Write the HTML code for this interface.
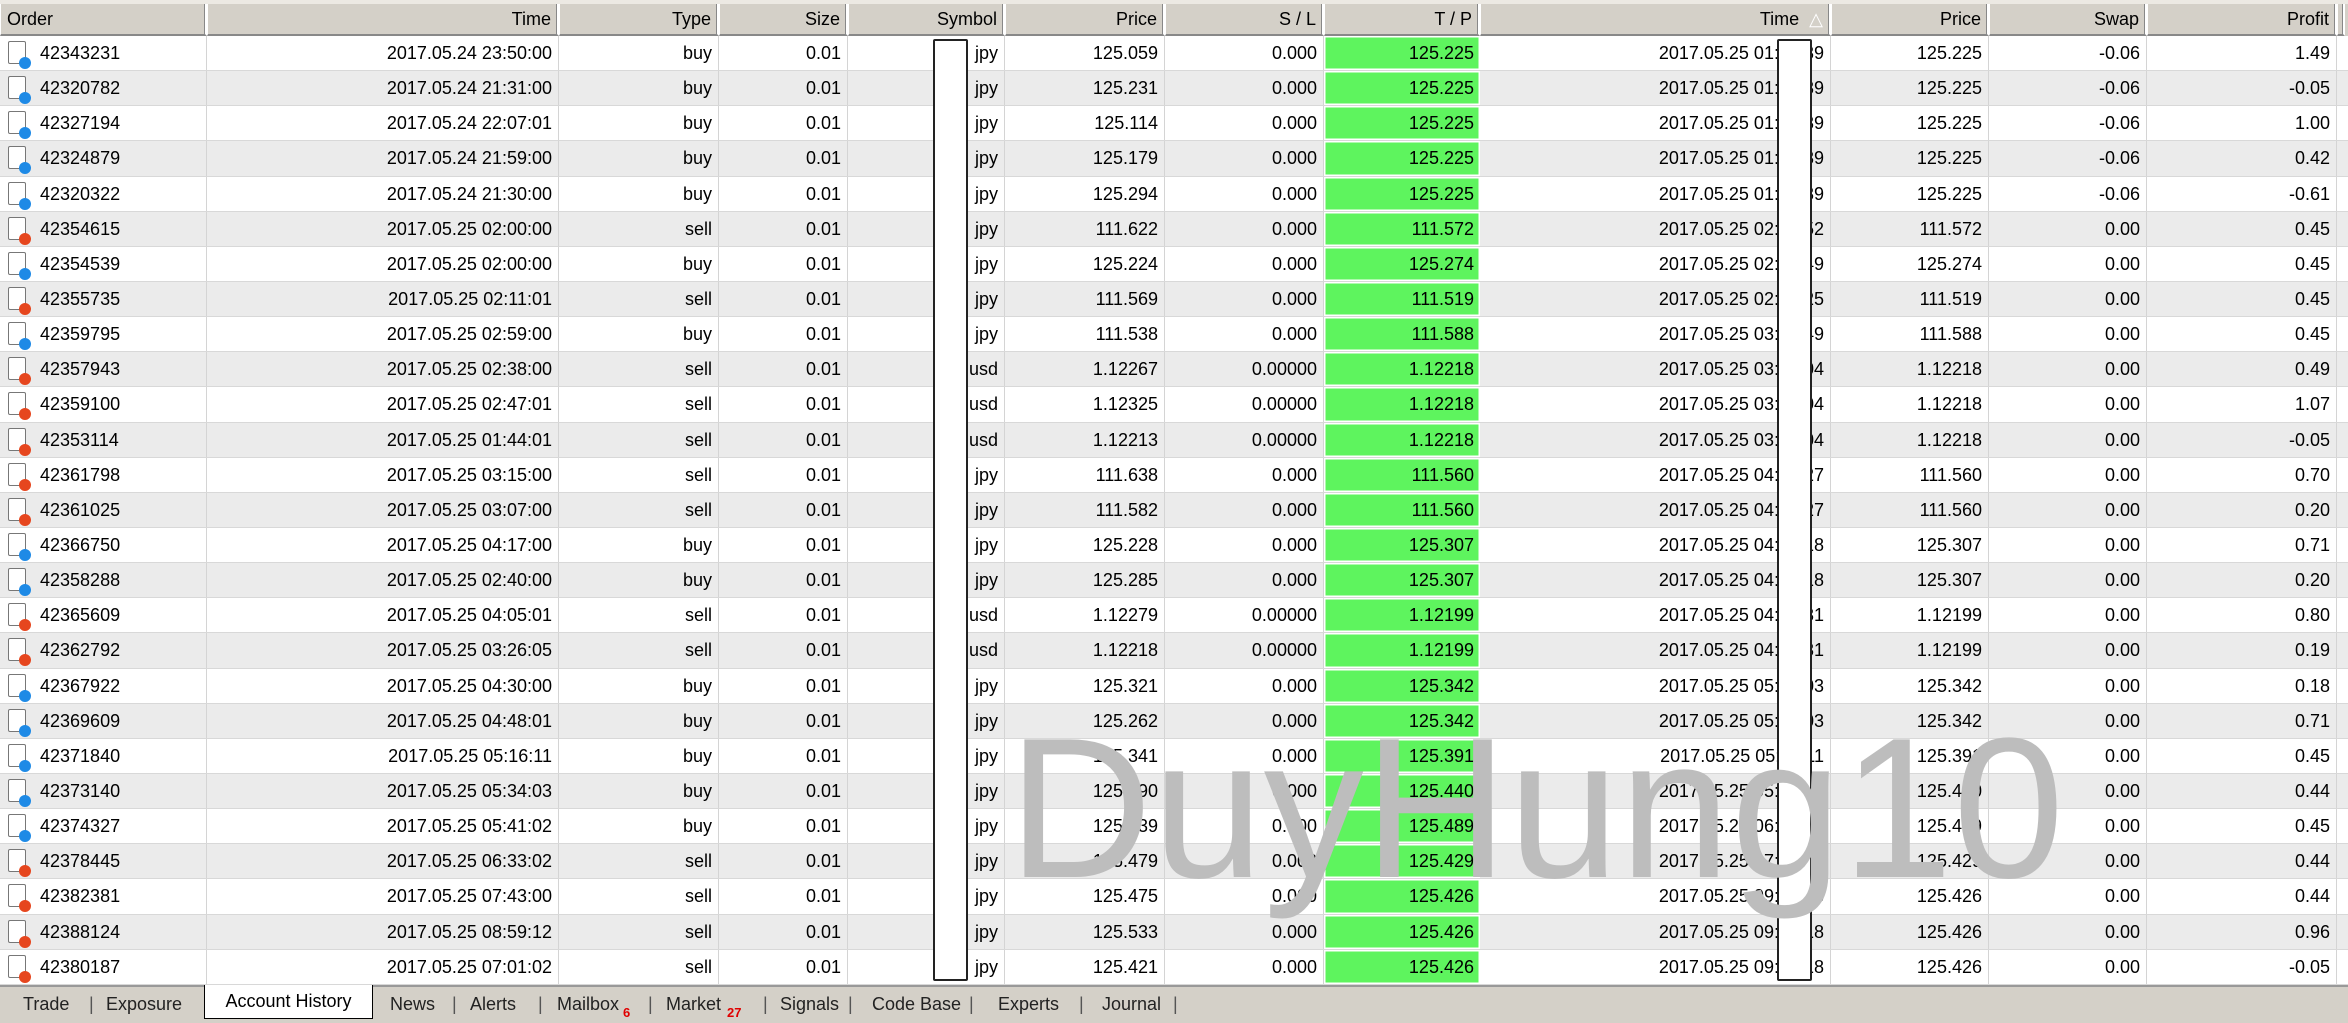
<!DOCTYPE html>
<html><head><meta charset="utf-8"><style>
*{margin:0;padding:0;box-sizing:border-box}
body{width:2348px;height:1023px;overflow:hidden;background:#fff;font-family:"Liberation Sans",Tahoma,sans-serif;font-size:18px;color:#000;position:relative}
.hdr{position:absolute;left:0;top:0;width:2348px;height:36px;background:#d4d0c8;border-top:4px solid #ece9e3;display:flex}
.hdr div{height:32px;line-height:30px;text-align:right;padding:0 6px;border-right:2px solid #fff;border-left:1px solid #fff;border-bottom:2px solid #888;box-shadow:inset -1px 0 0 #888;background:#d4d0c8}
.hdr div:first-child{text-align:left}
#rows{position:absolute;left:0;top:36px;width:2348px}
.r{display:flex;height:35.15px;line-height:34px;border-bottom:1px solid #d8d8d8}
.r:nth-child(even){background:#ebebeb}
.r div{text-align:right;padding-right:6px;border-right:1px solid #d4d4d4;white-space:nowrap;overflow:hidden;position:relative}
.r div:first-child{text-align:left;padding-left:40px}
.r div.g{background:#5ef45e;box-shadow:inset 0 0 0 1.5px #fff;border-right:none}
.ic{position:absolute;left:8px;top:5px;width:18px;height:23px;border:1.5px solid #777;background:#fff;border-radius:2px}
.ic:after{content:"";position:absolute;right:-6px;bottom:-6px;width:12px;height:12px;border-radius:50%;background:#1e8ae6}
.s .ic:after{background:#e6461e}
.c1{width:207px}.c2{width:352px}.c3{width:160px}.c4{width:129px}.c5{width:157px}.c6{width:160px}.c7{width:159px}.c8{width:156px}.c9{width:351px}.c10{width:158px}.c11{width:158px}.c12{width:190px}
.box{position:absolute;top:39px;height:942px;width:35px;background:#fff;border:2px solid #222;border-radius:2px}
.wm{position:absolute;left:1008px;top:709px;font-size:200px;line-height:1;color:#bdbdbd;white-space:nowrap}
.tabs{position:absolute;left:0;top:985px;width:2348px;height:38px;background:#d4d0c8;border-top:2px solid #999}
.tabs span{position:absolute;top:7px;font-size:18px;color:#222}
.tabs .sep{color:#555}
.tabs .act{position:absolute;left:204px;top:-2px;width:169px;height:34px;background:#fff;border:1.5px solid #000;border-top:none;text-align:center;line-height:32px;color:#000}
.tabs .red{color:#e00000;font-size:13px;font-weight:bold;top:18px}
</style></head><body>
<div class="hdr">
<div class="c1">Order</div><div class="c2">Time</div><div class="c3">Type</div><div class="c4">Size</div><div class="c5">Symbol</div><div class="c6">Price</div><div class="c7">S / L</div><div class="c8">T / P</div><div class="c9">Time &nbsp;<span style="color:#fff">△</span></div><div class="c10">Price</div><div class="c11">Swap</div><div class="c12">Profit</div><div style="width:8px;padding:0"></div>
</div>
<div id="rows">
<div class="r"><div class="c1"><i class="ic"></i>42343231</div><div class="c2">2017.05.24 23:50:00</div><div class="c3">buy</div><div class="c4">0.01</div><div class="c5">jpy</div><div class="c6">125.059</div><div class="c7">0.000</div><div class="c8 g">125.225</div><div class="c9">2017.05.25 01:15:39</div><div class="c10">125.225</div><div class="c11">-0.06</div><div class="c12">1.49</div></div>
<div class="r"><div class="c1"><i class="ic"></i>42320782</div><div class="c2">2017.05.24 21:31:00</div><div class="c3">buy</div><div class="c4">0.01</div><div class="c5">jpy</div><div class="c6">125.231</div><div class="c7">0.000</div><div class="c8 g">125.225</div><div class="c9">2017.05.25 01:15:39</div><div class="c10">125.225</div><div class="c11">-0.06</div><div class="c12">-0.05</div></div>
<div class="r"><div class="c1"><i class="ic"></i>42327194</div><div class="c2">2017.05.24 22:07:01</div><div class="c3">buy</div><div class="c4">0.01</div><div class="c5">jpy</div><div class="c6">125.114</div><div class="c7">0.000</div><div class="c8 g">125.225</div><div class="c9">2017.05.25 01:15:39</div><div class="c10">125.225</div><div class="c11">-0.06</div><div class="c12">1.00</div></div>
<div class="r"><div class="c1"><i class="ic"></i>42324879</div><div class="c2">2017.05.24 21:59:00</div><div class="c3">buy</div><div class="c4">0.01</div><div class="c5">jpy</div><div class="c6">125.179</div><div class="c7">0.000</div><div class="c8 g">125.225</div><div class="c9">2017.05.25 01:15:39</div><div class="c10">125.225</div><div class="c11">-0.06</div><div class="c12">0.42</div></div>
<div class="r"><div class="c1"><i class="ic"></i>42320322</div><div class="c2">2017.05.24 21:30:00</div><div class="c3">buy</div><div class="c4">0.01</div><div class="c5">jpy</div><div class="c6">125.294</div><div class="c7">0.000</div><div class="c8 g">125.225</div><div class="c9">2017.05.25 01:15:39</div><div class="c10">125.225</div><div class="c11">-0.06</div><div class="c12">-0.61</div></div>
<div class="r s"><div class="c1"><i class="ic"></i>42354615</div><div class="c2">2017.05.25 02:00:00</div><div class="c3">sell</div><div class="c4">0.01</div><div class="c5">jpy</div><div class="c6">111.622</div><div class="c7">0.000</div><div class="c8 g">111.572</div><div class="c9">2017.05.25 02:15:52</div><div class="c10">111.572</div><div class="c11">0.00</div><div class="c12">0.45</div></div>
<div class="r"><div class="c1"><i class="ic"></i>42354539</div><div class="c2">2017.05.25 02:00:00</div><div class="c3">buy</div><div class="c4">0.01</div><div class="c5">jpy</div><div class="c6">125.224</div><div class="c7">0.000</div><div class="c8 g">125.274</div><div class="c9">2017.05.25 02:15:49</div><div class="c10">125.274</div><div class="c11">0.00</div><div class="c12">0.45</div></div>
<div class="r s"><div class="c1"><i class="ic"></i>42355735</div><div class="c2">2017.05.25 02:11:01</div><div class="c3">sell</div><div class="c4">0.01</div><div class="c5">jpy</div><div class="c6">111.569</div><div class="c7">0.000</div><div class="c8 g">111.519</div><div class="c9">2017.05.25 02:15:25</div><div class="c10">111.519</div><div class="c11">0.00</div><div class="c12">0.45</div></div>
<div class="r"><div class="c1"><i class="ic"></i>42359795</div><div class="c2">2017.05.25 02:59:00</div><div class="c3">buy</div><div class="c4">0.01</div><div class="c5">jpy</div><div class="c6">111.538</div><div class="c7">0.000</div><div class="c8 g">111.588</div><div class="c9">2017.05.25 03:15:49</div><div class="c10">111.588</div><div class="c11">0.00</div><div class="c12">0.45</div></div>
<div class="r s"><div class="c1"><i class="ic"></i>42357943</div><div class="c2">2017.05.25 02:38:00</div><div class="c3">sell</div><div class="c4">0.01</div><div class="c5">usd</div><div class="c6">1.12267</div><div class="c7">0.00000</div><div class="c8 g">1.12218</div><div class="c9">2017.05.25 03:15:04</div><div class="c10">1.12218</div><div class="c11">0.00</div><div class="c12">0.49</div></div>
<div class="r s"><div class="c1"><i class="ic"></i>42359100</div><div class="c2">2017.05.25 02:47:01</div><div class="c3">sell</div><div class="c4">0.01</div><div class="c5">usd</div><div class="c6">1.12325</div><div class="c7">0.00000</div><div class="c8 g">1.12218</div><div class="c9">2017.05.25 03:15:04</div><div class="c10">1.12218</div><div class="c11">0.00</div><div class="c12">1.07</div></div>
<div class="r s"><div class="c1"><i class="ic"></i>42353114</div><div class="c2">2017.05.25 01:44:01</div><div class="c3">sell</div><div class="c4">0.01</div><div class="c5">usd</div><div class="c6">1.12213</div><div class="c7">0.00000</div><div class="c8 g">1.12218</div><div class="c9">2017.05.25 03:15:04</div><div class="c10">1.12218</div><div class="c11">0.00</div><div class="c12">-0.05</div></div>
<div class="r s"><div class="c1"><i class="ic"></i>42361798</div><div class="c2">2017.05.25 03:15:00</div><div class="c3">sell</div><div class="c4">0.01</div><div class="c5">jpy</div><div class="c6">111.638</div><div class="c7">0.000</div><div class="c8 g">111.560</div><div class="c9">2017.05.25 04:15:27</div><div class="c10">111.560</div><div class="c11">0.00</div><div class="c12">0.70</div></div>
<div class="r s"><div class="c1"><i class="ic"></i>42361025</div><div class="c2">2017.05.25 03:07:00</div><div class="c3">sell</div><div class="c4">0.01</div><div class="c5">jpy</div><div class="c6">111.582</div><div class="c7">0.000</div><div class="c8 g">111.560</div><div class="c9">2017.05.25 04:15:27</div><div class="c10">111.560</div><div class="c11">0.00</div><div class="c12">0.20</div></div>
<div class="r"><div class="c1"><i class="ic"></i>42366750</div><div class="c2">2017.05.25 04:17:00</div><div class="c3">buy</div><div class="c4">0.01</div><div class="c5">jpy</div><div class="c6">125.228</div><div class="c7">0.000</div><div class="c8 g">125.307</div><div class="c9">2017.05.25 04:15:18</div><div class="c10">125.307</div><div class="c11">0.00</div><div class="c12">0.71</div></div>
<div class="r"><div class="c1"><i class="ic"></i>42358288</div><div class="c2">2017.05.25 02:40:00</div><div class="c3">buy</div><div class="c4">0.01</div><div class="c5">jpy</div><div class="c6">125.285</div><div class="c7">0.000</div><div class="c8 g">125.307</div><div class="c9">2017.05.25 04:15:18</div><div class="c10">125.307</div><div class="c11">0.00</div><div class="c12">0.20</div></div>
<div class="r s"><div class="c1"><i class="ic"></i>42365609</div><div class="c2">2017.05.25 04:05:01</div><div class="c3">sell</div><div class="c4">0.01</div><div class="c5">usd</div><div class="c6">1.12279</div><div class="c7">0.00000</div><div class="c8 g">1.12199</div><div class="c9">2017.05.25 04:15:31</div><div class="c10">1.12199</div><div class="c11">0.00</div><div class="c12">0.80</div></div>
<div class="r s"><div class="c1"><i class="ic"></i>42362792</div><div class="c2">2017.05.25 03:26:05</div><div class="c3">sell</div><div class="c4">0.01</div><div class="c5">usd</div><div class="c6">1.12218</div><div class="c7">0.00000</div><div class="c8 g">1.12199</div><div class="c9">2017.05.25 04:15:31</div><div class="c10">1.12199</div><div class="c11">0.00</div><div class="c12">0.19</div></div>
<div class="r"><div class="c1"><i class="ic"></i>42367922</div><div class="c2">2017.05.25 04:30:00</div><div class="c3">buy</div><div class="c4">0.01</div><div class="c5">jpy</div><div class="c6">125.321</div><div class="c7">0.000</div><div class="c8 g">125.342</div><div class="c9">2017.05.25 05:15:03</div><div class="c10">125.342</div><div class="c11">0.00</div><div class="c12">0.18</div></div>
<div class="r"><div class="c1"><i class="ic"></i>42369609</div><div class="c2">2017.05.25 04:48:01</div><div class="c3">buy</div><div class="c4">0.01</div><div class="c5">jpy</div><div class="c6">125.262</div><div class="c7">0.000</div><div class="c8 g">125.342</div><div class="c9">2017.05.25 05:15:03</div><div class="c10">125.342</div><div class="c11">0.00</div><div class="c12">0.71</div></div>
<div class="r"><div class="c1"><i class="ic"></i>42371840</div><div class="c2">2017.05.25 05:16:11</div><div class="c3">buy</div><div class="c4">0.01</div><div class="c5">jpy</div><div class="c6">125.341</div><div class="c7">0.000</div><div class="c8 g">125.391</div><div class="c9">2017.05.25 05:15:11</div><div class="c10">125.391</div><div class="c11">0.00</div><div class="c12">0.45</div></div>
<div class="r"><div class="c1"><i class="ic"></i>42373140</div><div class="c2">2017.05.25 05:34:03</div><div class="c3">buy</div><div class="c4">0.01</div><div class="c5">jpy</div><div class="c6">125.390</div><div class="c7">0.000</div><div class="c8 g">125.440</div><div class="c9">2017.05.25 05:15:40</div><div class="c10">125.440</div><div class="c11">0.00</div><div class="c12">0.44</div></div>
<div class="r"><div class="c1"><i class="ic"></i>42374327</div><div class="c2">2017.05.25 05:41:02</div><div class="c3">buy</div><div class="c4">0.01</div><div class="c5">jpy</div><div class="c6">125.439</div><div class="c7">0.000</div><div class="c8 g">125.489</div><div class="c9">2017.05.25 06:15:20</div><div class="c10">125.489</div><div class="c11">0.00</div><div class="c12">0.45</div></div>
<div class="r s"><div class="c1"><i class="ic"></i>42378445</div><div class="c2">2017.05.25 06:33:02</div><div class="c3">sell</div><div class="c4">0.01</div><div class="c5">jpy</div><div class="c6">125.479</div><div class="c7">0.000</div><div class="c8 g">125.429</div><div class="c9">2017.05.25 07:15:20</div><div class="c10">125.429</div><div class="c11">0.00</div><div class="c12">0.44</div></div>
<div class="r s"><div class="c1"><i class="ic"></i>42382381</div><div class="c2">2017.05.25 07:43:00</div><div class="c3">sell</div><div class="c4">0.01</div><div class="c5">jpy</div><div class="c6">125.475</div><div class="c7">0.000</div><div class="c8 g">125.426</div><div class="c9">2017.05.25 09:15:18</div><div class="c10">125.426</div><div class="c11">0.00</div><div class="c12">0.44</div></div>
<div class="r s"><div class="c1"><i class="ic"></i>42388124</div><div class="c2">2017.05.25 08:59:12</div><div class="c3">sell</div><div class="c4">0.01</div><div class="c5">jpy</div><div class="c6">125.533</div><div class="c7">0.000</div><div class="c8 g">125.426</div><div class="c9">2017.05.25 09:15:18</div><div class="c10">125.426</div><div class="c11">0.00</div><div class="c12">0.96</div></div>
<div class="r s"><div class="c1"><i class="ic"></i>42380187</div><div class="c2">2017.05.25 07:01:02</div><div class="c3">sell</div><div class="c4">0.01</div><div class="c5">jpy</div><div class="c6">125.421</div><div class="c7">0.000</div><div class="c8 g">125.426</div><div class="c9">2017.05.25 09:15:18</div><div class="c10">125.426</div><div class="c11">0.00</div><div class="c12">-0.05</div></div>
</div>
<div class="box" style="left:933px"></div>
<div class="box" style="left:1777px"></div>
<div class="wm">DuyHung10</div>
<div class="tabs">
<span style="left:23px">Trade</span><span class="sep" style="left:89px">|</span>
<span style="left:106px">Exposure</span>
<div class="act">Account History</div>
<span style="left:390px">News</span><span class="sep" style="left:452px">|</span>
<span style="left:470px">Alerts</span><span class="sep" style="left:538px">|</span>
<span style="left:557px">Mailbox</span><span class="red" style="left:623px">6</span><span class="sep" style="left:648px">|</span>
<span style="left:666px">Market</span><span class="red" style="left:727px">27</span><span class="sep" style="left:763px">|</span>
<span style="left:780px">Signals</span><span class="sep" style="left:848px">|</span>
<span style="left:872px">Code Base</span><span class="sep" style="left:969px">|</span>
<span style="left:998px">Experts</span><span class="sep" style="left:1079px">|</span>
<span style="left:1102px">Journal</span><span class="sep" style="left:1173px">|</span>
</div>
</body></html>
